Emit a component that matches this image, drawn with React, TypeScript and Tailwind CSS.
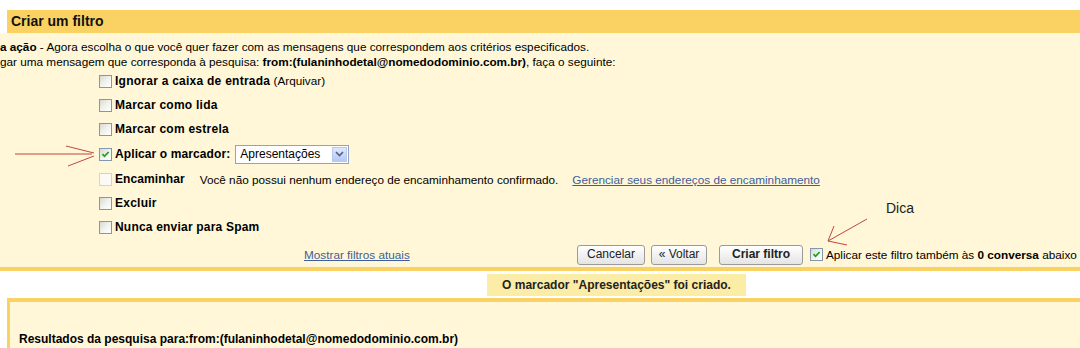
import React from "react";

function Box({ checked = false, disabled = false }: { checked?: boolean; disabled?: boolean }) {
  return (
    <span
      className={
        "relative inline-block w-[13px] h-[13px] shrink-0 border " +
        (disabled
          ? "border-[#d8d4c4] bg-[#fbfaf4]"
          : "border-[#8597ad] bg-gradient-to-br from-[#d9d9d2] via-[#f2f2ee] to-white")
      }
    >
      {checked && (
        <svg viewBox="0 0 11 11" className="absolute left-0 top-0 w-[11px] h-[11px]">
          <path d="M2.5 5.2 L4.5 7.3 L8.6 3" fill="none" stroke="#21a121" strokeWidth="1.8" />
        </svg>
      )}
    </span>
  );
}

function Row({ children, h = "h-[24px]" }: { children: React.ReactNode; h?: string }) {
  return <div className={"flex items-center gap-[3px] " + h}>{children}</div>;
}

function Btn({ children, bold = false, w }: { children: React.ReactNode; bold?: boolean; w: string }) {
  return (
    <div
      className={
        "shrink-0 h-[20px] flex items-center justify-center rounded-[3px] border border-[#9a9a9a] bg-gradient-to-b from-white to-[#e4e4e4] text-[12px] text-[#222] " +
        w +
        (bold ? " font-bold" : "")
      }
    >
      {children}
    </div>
  );
}

export default function App() {
  return (
    <div className="relative w-[1080px] h-[348px] overflow-hidden bg-white text-black font-['Liberation_Sans',Arial,sans-serif]">
      <div className="h-[10px]" />
      <div className="ml-[7px] h-[23px] bg-[#fad163] flex items-center pl-[4px] text-[14px] font-bold text-[#111]">
        Criar um filtro
      </div>
      <div className="bg-[#fff7d7] pt-[6px] text-[11.75px] leading-[15px] whitespace-nowrap">
        <div>
          <b>a ação</b> - Agora escolha o que você quer fazer com as mensagens que correspondem aos critérios especificados.
        </div>
        <div>
          gar uma mensagem que corresponda à pesquisa: <b>from:(fulaninhodetal@nomedodominio.com.br)</b>, faça o seguinte:
        </div>
        <div className="pl-[99px]">
          <Row>
            <Box />
            <span>
              <b className="text-[12px] tracking-[0.25px]">Ignorar a caixa de entrada</b> <span>(Arquivar)</span>
            </span>
          </Row>
          <Row>
            <Box />
            <b className="text-[12px] tracking-[0.25px]">Marcar como lida</b>
          </Row>
          <Row>
            <Box />
            <b className="text-[12px] tracking-[0.25px]">Marcar com estrela</b>
          </Row>
          <Row h="h-[26px]">
            <Box checked />
            <b className="text-[12px] tracking-[0.1px]">Aplicar o marcador:</b>
            <div className="ml-[2px] w-[114px] h-[19px] border border-[#8ea4c2] bg-white flex items-center justify-between pl-[4px] pr-[1px]">
              <span className="text-[12px]">Apresentações</span>
              <span className="w-[15px] h-[15px] bg-gradient-to-b from-[#dfe8fd] to-[#b5c8f5] border border-[#b9c9ef] flex items-center justify-center">
                <svg viewBox="0 0 9 6" className="w-[9px] h-[6px]">
                  <path d="M1 1 L4.5 4.5 L8 1" fill="none" stroke="#4d6185" strokeWidth="1.6" />
                </svg>
              </span>
            </div>
          </Row>
          <Row>
            <Box disabled />
            <b className="text-[12px] tracking-[0.1px]">Encaminhar</b>
            <span className="ml-[12px]">Você não possui nenhum endereço de encaminhamento confirmado.</span>
            <span className="ml-[11px] text-[#3e5e9c] underline">Gerenciar seus endereços de encaminhamento</span>
          </Row>
          <Row>
            <Box />
            <b className="text-[12px] tracking-[0.25px]">Excluir</b>
          </Row>
          <Row>
            <Box />
            <b className="text-[12px] tracking-[0.2px]">Nunca enviar para Spam</b>
          </Row>
        </div>
        <div className="h-[28px] pt-[3px] flex items-center">
          <div className="shrink-0 w-[577px] pl-[304px] text-[#3e5e9c] underline">Mostrar filtros atuais</div>
          <div className="shrink-0 flex items-center gap-[6px]">
            <Btn w="w-[68px]">Cancelar</Btn>
            <Btn w="w-[56px]">« Voltar</Btn>
            <div className="ml-[6px]">
              <Btn w="w-[84px]" bold>
                Criar filtro
              </Btn>
            </div>
          </div>
          <div className="shrink-0 ml-[7px] flex items-center gap-[3px]">
            <Box checked />
            <span>
              Aplicar este filtro também às <b>0 conversa</b> abaixo
            </span>
          </div>
        </div>
      </div>
      <div className="h-[4px] bg-[#fad163]" />
      <div className="mt-[3px] ml-[487px] w-[259px] h-[22px] bg-[#fbeca6] flex items-center justify-center text-[12px] font-bold text-[#222]">
        O marcador "Apresentações" foi criado.
      </div>
      <div className="mt-[2px] ml-[7px] h-[60px] border-t-4 border-l-[3px] border-[#fad163] bg-[#fff7d7] pt-[30px] pl-[9px] text-[12px] font-bold leading-[15px]">
        Resultados da pesquisa para:from:(fulaninhodetal@nomedodominio.com.br)
      </div>

      <svg className="absolute left-0 top-0 pointer-events-none" width="1080" height="348">
        <g stroke="#c2463c" strokeWidth="1" fill="none">
          <path d="M15 154 L92 154" />
          <path d="M66 146 L94 153" />
          <path d="M68 166 L94 156" />
          <path d="M867 219 L828 241" />
          <path d="M828 241 L834 226" />
          <path d="M828 241 L847 245" />
        </g>
      </svg>
      <div className="absolute left-[886px] top-[199px] text-[14px] leading-[18px] text-[#222]">Dica</div>
    </div>
  );
}
